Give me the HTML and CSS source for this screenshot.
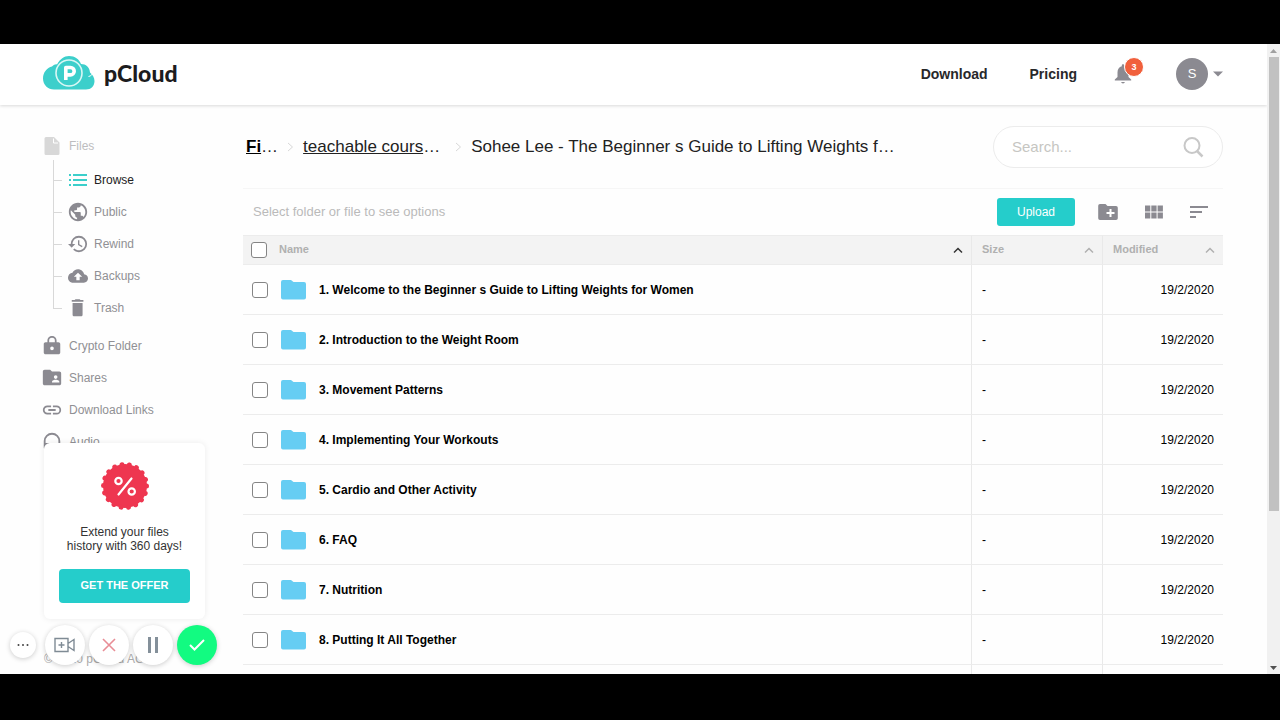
FILE: index.html
```html
<!DOCTYPE html>
<html lang="en">
<head>
  <meta charset="UTF-8">
  <title>pCloud - My files</title>
  <meta name="viewport" content="width=device-width, initial-scale=1.0">
  <link rel="stylesheet" href="styles.css">
</head>

<body>
  <div class="window">
    <div class="page">
      <!-- Top bar -->
      <header class="topbar">
        <a class="logo" href="#">
          <svg width="52" height="34" viewBox="0 0 52 34">
            <path d="M11 33.500C5 33.500 0 29 0 22.500C0 16.500 4 11.500 9 10.500C11 8.500 13 8 14 8.500C17 3 21 0 26 0C32 0 36 3 38 8C43 8 46.500 11 47 16.500C49.500 18.500 51.500 21.500 51.500 25C51.500 30 48 33.500 43 33.500Z" fill="#3ccfcb"/>
            <circle cx="26" cy="17" r="13" fill="#3ccfcb" stroke="#d9f7f5" stroke-width="1.600"/>
            <path d="M22.800 24V11.500H27.500A3.700 3.700 0 0 1 27.500 18.900H22.800" fill="none" stroke="#fff" stroke-width="3.600" stroke-linejoin="round"/>
            <path d="M45.500 20.500C48 20 49.500 18.500 50 16.500" fill="none" stroke="#fff" stroke-width="1"/>
          </svg>
          <span>pCloud</span>
        </a>
        <nav class="topnav">
          <a href="#">Download</a>
          <a href="#">Pricing</a>
          <button class="bell" aria-label="Notifications">
            <svg width="18" height="20" viewBox="0 0 18 20">
              <path d="M9 19.500c1 0 1.800-.6 1.800-1.400H7.200c0 .8.800 1.400 1.800 1.400zM14.500 13V8.500c0-3.200-1.500-5.600-4.300-6.300V1.500C10.200.7 9.700.2 9 .2s-1.200.5-1.200 1.300v.7C5 2.900 3.500 5.300 3.500 8.500V13L.8 15.500v1h16.400v-1z" fill="#8b8a91"/>
            </svg>
            <span class="badge">3</span>
          </button>
          <button class="account" aria-label="Account">
            <span class="avatar">S</span>
            <svg width="10" height="6" viewBox="0 0 10 6"><path d="M0 .5h10L5 5.500z" fill="#8b8a91"/></svg>
          </button>
        </nav>
      </header>

      <div class="content">
        <!-- Sidebar -->
        <aside class="sidebar">
          <nav class="menu">
            <a class="item files" href="#">
              <svg width="18" height="20" viewBox="0 0 18 20"><path d="M3 1h8l5.500 5.500V17.500a1.500 1.500 0 0 1-1.500 1.500h-12A1.500 1.500 0 0 1 1.500 17.500V2.500A1.500 1.500 0 0 1 3 1z" fill="#d8d8d8"/><path d="M10.500 2.500v4.500H15" fill="none" stroke="#fff"/></svg>
              Files
            </a>
            <div class="tree">
              <a class="item active" href="#">
                <svg width="20" height="20" viewBox="0 0 20 20"><path d="M1 4h2v2H1zM1 9h2v2H1zM1 14h2v2H1zM5 4h14v2H5zM5 9h14v2H5zM5 14h14v2H5z" fill="#3ccfcb"/></svg>
                Browse
              </a>
              <a class="item" href="#">
                <svg width="22" height="22" viewBox="0 0 24 24"><path d="M12 2C6.480 2 2 6.480 2 12s4.480 10 10 10 10-4.480 10-10S17.520 2 12 2zm-1 17.930c-3.950-.49-7-3.850-7-7.930 0-.62.08-1.210.21-1.790L9 15v1c0 1.100.9 2 2 2v1.930zm6.900-2.540c-.26-.81-1-1.390-1.900-1.390h-1v-3c0-.55-.45-1-1-1H8v-2h2c.55 0 1-.45 1-1V7h2c1.100 0 2-.9 2-2v-.41c2.930 1.190 5 4.060 5 7.410 0 2.080-.8 3.970-2.100 5.390z"/></svg>
                Public
              </a>
              <a class="item" href="#">
                <svg width="20" height="20" viewBox="0 1 24 22"><path d="M13 3a9 9 0 0 0-9 9H1l3.890 3.890.07.14L9 12H6c0-3.870 3.130-7 7-7s7 3.130 7 7-3.130 7-7 7c-1.930 0-3.680-.79-4.940-2.060l-1.420 1.420A8.950 8.950 0 0 0 13 21a9 9 0 0 0 0-18zm-1 5v5l4.280 2.540.72-1.210-3.500-2.080V8H12z"/></svg>
                Rewind
              </a>
              <a class="item" href="#">
                <svg width="20" height="20" viewBox="0 0 24 24"><path d="M19.350 10.040C18.670 6.590 15.640 4 12 4 9.110 4 6.600 5.640 5.350 8.040 2.340 8.360 0 10.910 0 14c0 3.310 2.690 6 6 6h13c2.760 0 5-2.240 5-5 0-2.640-2.050-4.780-4.650-4.960zM14 13v4h-4v-4H7l5-5 5 5h-3z"/></svg>
                Backups
              </a>
              <a class="item" href="#">
                <svg width="20" height="20" viewBox="0 1 24 24"><path d="M5.500 21c0 1.100.9 2 2 2h8c1.100 0 2-.9 2-2V7h-12v14zM18.500 3.500H15l-1-1H9l-1 1H4.500v2h14v-2z"/></svg>
                Trash
              </a>
            </div>
            <a class="item" href="#">
              <svg width="22" height="22" viewBox="0 0 24 24"><path d="M18 8h-1V6c0-2.760-2.240-5-5-5S7 3.240 7 6v2H5c-1.100 0-2 .9-2 2v9c0 1.100.9 2 2 2h14c1.100 0 2-.9 2-2v-9c0-1.100-.9-2-2-2zm-6 8.500a2 2 0 1 1 0-4 2 2 0 0 1 0 4zm3.100-8.500H8.900V6a3.100 3.100 0 0 1 6.200 0v2z"/></svg>
              Crypto Folder
            </a>
            <a class="item" href="#">
              <svg width="22" height="22" viewBox="1 1 24 24"><path d="M21 6h-8l-2-2H5c-1.100 0-2 .9-2 2v13c0 1.100.9 2 2 2h16c1.100 0 2-.9 2-2V8c0-1.100-.9-2-2-2zm-4 4a2 2 0 1 1 0 4 2 2 0 0 1 0-4zm4 8h-8v-1c0-1.330 2.670-2 4-2s4 .67 4 2v1z"/></svg>
              Shares
            </a>
            <a class="item" href="#">
              <svg width="22" height="22" viewBox="0 0 24 24"><path d="M3.900 12c0-1.710 1.390-3.100 3.100-3.100h4V7H7a5 5 0 0 0 0 10h4v-1.900H7c-1.710 0-3.100-1.390-3.100-3.100zM8 13h8v-2H8v2zm9-6h-4v1.900h4a3.100 3.100 0 0 1 0 6.200h-4V17h4a5 5 0 0 0 0-10z"/></svg>
              Download Links
            </a>
            <a class="item" href="#">
              <svg width="22" height="22" viewBox="0 0 24 24"><path d="M12 2a9 9 0 0 0-9 9v7c0 1.660 1.340 3 3 3h3v-8H5v-2a7 7 0 0 1 14 0v2h-4v8h3c1.660 0 3-1.340 3-3v-7a9 9 0 0 0-9-9z"/></svg>
              Audio
            </a>
          </nav>

          <section class="promo">
            <svg width="50" height="50" viewBox="-25 -25 50 50">
              <circle r="22" fill="#ee3650"/>
              <circle r="21.500" fill="none" stroke="#ee3650" stroke-width="5" stroke-linecap="round" stroke-dasharray="0.010 7.495"/>
              <g fill="none" stroke="#fff" stroke-width="2.200" stroke-linecap="round">
                <path d="M6.500 -7.500L-6.500 8.500"/>
                <circle cx="-6.500" cy="-5" r="3.200"/>
                <circle cx="6.700" cy="5.500" r="3.200"/>
              </g>
            </svg>
            <p>Extend your files<br>history with 360 days!</p>
            <button class="offer">GET THE OFFER</button>
          </section>

          <footer class="copyright">© 2020 pCloud AG</footer>
        </aside>

        <!-- File list -->
        <main class="main">
          <div class="pathbar">
            <nav class="crumbs">
              <span><a class="root" href="#">Fi</a>…</span>
              <svg width="7" height="10" viewBox="0 0 7 10"><path d="M1 1l4.500 4L1 9"/></svg>
              <span class="parent"><a href="#">teachable cours</a>…</span>
              <svg width="7" height="10" viewBox="0 0 7 10"><path d="M1 1l4.500 4L1 9"/></svg>
              <span>Sohee Lee - The Beginner s Guide to Lifting Weights f…</span>
            </nav>
            <form class="search">
              <input type="search" placeholder="Search..." aria-label="Search">
              <button aria-label="Find">
                <svg width="22" height="22" viewBox="0 0 22 22"><circle cx="10" cy="9.500" r="7.500"/><path d="M15 15L20.500 20.500" stroke-width="2.500"/></svg>
              </button>
            </form>
          </div>

          <div class="toolbar">
            <span class="hint">Select folder or file to see options</span>
            <button class="upload">Upload</button>
            <button class="tool" aria-label="New folder">
              <svg width="20" height="18" viewBox="0 0 20 18"><path d="M2 1h5.500l2 2H18a1.800 1.800 0 0 1 1.800 1.800v10.400A1.800 1.800 0 0 1 18 17H2A1.800 1.800 0 0 1 .2 15.200V2.800A1.800 1.800 0 0 1 2 1z"/><path d="M8.500 10h8M12.500 6v8" stroke="#fff" stroke-width="2"/></svg>
            </button>
            <button class="tool" aria-label="Grid view">
              <svg width="18" height="14" viewBox="0 0 18 14"><path d="M0 .5h5.300v6H0zM6.300.5h5.300v6H6.300zM12.600.5h5.300v6h-5.300zM0 7.500h5.300v6H0zM6.300 7.500h5.300v6H6.300zM12.600 7.500h5.300v6h-5.300z"/></svg>
            </button>
            <button class="tool" aria-label="Sort">
              <svg width="18" height="14" viewBox="0 0 18 14"><path d="M0 1h18v2H0zM0 6h12v2H0zM0 11h6v2H0z"/></svg>
            </button>
          </div>

          <table class="files-table">
            <thead>
              <tr>
                <th class="name">
                  <div class="head">
                    <input type="checkbox" aria-label="Select all">
                    <span>Name</span>
                    <svg class="sorted" width="10" height="7" viewBox="0 0 10 7"><path d="M1 5.500L5 1.500L9 5.500"/></svg>
                  </div>
                </th>
                <th class="size">
                  <div class="head">
                    <span>Size</span>
                    <svg width="10" height="7" viewBox="0 0 10 7"><path d="M1 5.500L5 1.500L9 5.500"/></svg>
                  </div>
                </th>
                <th class="modified">
                  <div class="head">
                    <span>Modified</span>
                    <svg width="10" height="7" viewBox="0 0 10 7"><path d="M1 5.500L5 1.500L9 5.500"/></svg>
                  </div>
                </th>
              </tr>
            </thead>
            <tbody id="rows"></tbody>
          </table>
        </main>
      </div>
    </div>

    <div class="scrollbar">
      <svg width="7" height="4" viewBox="0 0 7 4"><path d="M0 4h7L3.500 0z" fill="#a0a0a0"/></svg>
      <div class="track"><div class="thumb"></div></div>
      <svg width="7" height="4" viewBox="0 0 7 4"><path d="M0 0h7L3.500 4z" fill="#505050"/></svg>
    </div>

    <!-- Recorder controls -->
    <div class="recorder">
      <button class="more" aria-label="More"><svg width="12" height="4" viewBox="0 0 12 4" fill="#444"><circle cx="1.500" cy="2" r="1"/><circle cx="6" cy="2" r="1"/><circle cx="10.500" cy="2" r="1"/></svg></button>
      <button aria-label="Camera"><svg width="22" height="16" viewBox="0 0 22 16" fill="none" stroke="#7f8b95" stroke-width="1.400"><path d="M1 1.500h13v13H1zM14 6.500l6-4v11l-6-4M4.500 8h6M7.500 5v6"/></svg></button>
      <button aria-label="Cancel"><svg width="14" height="14" viewBox="0 0 14 14" fill="none" stroke="#e88d96" stroke-width="1.600"><path d="M1 1l12 12M13 1L1 13"/></svg></button>
      <button aria-label="Pause"><svg width="12" height="16" viewBox="0 0 12 16" fill="#84909a"><path d="M1 0h3v16H1zM8 0h3v16H8z"/></svg></button>
      <button class="done" aria-label="Finish"><svg width="16" height="12" viewBox="0 0 16 12" fill="none" stroke="#fff" stroke-width="2"><path d="M1 6l4.500 4.500L15 1"/></svg></button>
    </div>
  </div>

  <script src="script.js"></script>
</body>
</html>
```
FILE: styles.css
```css
* {
  margin: 0;
  padding: 0;
  box-sizing: border-box;
}
body {
  font-family: "Liberation Sans", Arial, sans-serif;
  font-size: 13px;
  background-color: #000;
  height: 100vh;
  padding: 44px 0 46px;
  overflow: hidden;
}
a {
  color: inherit;
  text-decoration: none;
}
button {
  font-family: inherit;
  border: none;
  background: none;
  cursor: pointer;
}
svg {
  display: block;
  flex-shrink: 0;
}
.window {
  position: relative;
  display: flex;
  height: 100%;
  background-color: #fefefe;
  overflow: hidden;
}
.page {
  flex: 1;
  min-width: 0;
  display: flex;
  flex-direction: column;
}

/* TOP BAR */
.topbar {
  display: flex;
  flex-shrink: 0;
  align-items: center;
  justify-content: space-between;
  height: 61px;
  padding: 0 44px 2px 43px;
  background-color: #fff;
  box-shadow: 0 1px 3px rgba(0, 0, 0, 0.15);
}
.logo {
  display: flex;
  align-items: center;
  gap: 9px;
  font-family: Lato, sans-serif;
  font-size: 23px;
  font-weight: 900;
  line-height: 28px;
  padding-bottom: 2px;
  color: #1c1c1e;
}
.topnav {
  display: flex;
  align-items: center;
  font-size: 14px;
  font-weight: bold;
  color: #28282a;
}
.topnav a {
  margin-right: 42px;
}
.bell {
  position: relative;
  width: 18px;
  margin: 0 44px 0 -5px;
}
.badge {
  position: absolute;
  top: -7px;
  left: 10px;
  width: 20px;
  height: 20px;
  border: 1px solid #fff;
  border-radius: 50%;
  background-color: #f1603c;
  color: #fff;
  font-size: 9px;
  font-weight: bold;
  line-height: 18px;
  text-align: center;
}
.account {
  display: flex;
  align-items: center;
  gap: 5px;
}
.avatar {
  width: 32px;
  height: 32px;
  border-radius: 50%;
  background-color: #8b8a91;
  color: #fff;
  font-size: 13px;
  line-height: 32px;
}

.content {
  flex: 1;
  min-height: 0;
  display: flex;
  gap: 38px;
  padding: 0 44px;
}

/* SIDEBAR */
.sidebar {
  display: flex;
  flex-direction: column;
  flex-shrink: 0;
  width: 161px;
}
.menu {
  flex: 1;
  min-height: 0;
  padding-top: 25px;
  margin-left: -3px;
}
.item {
  display: flex;
  align-items: center;
  gap: 6px;
  height: 32px;
  color: #909094;
  fill: #8b8a91;
  font-size: 13px;
}
.item svg {
  width: 22px;
}
.files {
  color: #bdbdbf;
}
.tree {
  margin: 2px 0 6px 12px;
  position: relative;
}
.tree::before {
  content: "";
  position: absolute;
  top: -4px;
  bottom: 16px;
  left: 0;
  border-left: 1px solid #d8d8d8;
}
.tree .item {
  gap: 5px;
}
.tree .item::before {
  content: "";
  width: 9px;
  border-top: 1px solid #d8d8d8;
}
.menu .item {
  font-size: 12px;
}
.tree .active {
  color: #222;
}
.promo {
  position: relative;
  display: flex;
  flex-direction: column;
  align-items: center;
  flex-shrink: 0;
  height: 176px;
  padding: 18px 15px 15px;
  border-radius: 6px;
  background-color: #fff;
  box-shadow: 0 0 6px rgba(0, 0, 0, 0.08);
}
.promo p {
  margin: 14px 0 16px;
  color: #333;
  font-size: 12px;
  line-height: 14px;
  text-align: center;
}
.offer {
  width: 100%;
  height: 34px;
  padding-bottom: 2px;
  border-radius: 4px;
  background-color: #25cdcb;
  color: #fff;
  font-size: 11px;
  font-weight: bold;
}
.copyright {
  flex-shrink: 0;
  height: 55px;
  padding-top: 33px;
  color: #aaa;
  font-size: 12px;
  line-height: 14px;
}

/* MAIN */
.main {
  flex: 1;
  min-width: 0;
}
.pathbar {
  display: flex;
  align-items: center;
  justify-content: space-between;
  height: 84px;
  border-bottom: 1px solid #f6f6f6;
}
.crumbs {
  display: flex;
  align-items: center;
  gap: 9px;
  padding-left: 3px;
  color: #222;
  font-size: 17px;
  white-space: nowrap;
}
.crumbs svg {
  fill: none;
  stroke: #d8d8d8;
}
.crumbs a {
  text-decoration: underline;
}
.crumbs .root {
  color: #000;
  font-weight: bold;
}
.crumbs .parent {
  padding-right: 6px;
}
.search {
  display: flex;
  align-items: center;
  width: 230px;
  height: 42px;
  padding: 0 18px;
  border: 1px solid #ececec;
  border-radius: 21px;
  background-color: #fff;
}
.search input {
  flex: 1;
  min-width: 0;
  border: none;
  outline: none;
  background: none;
  font-family: inherit;
  font-size: 15px;
}
.search input::placeholder {
  color: #c6c6c2;
}
.search svg {
  fill: none;
  stroke: #c8c8c8;
  stroke-width: 2;
}
.toolbar {
  display: flex;
  align-items: center;
  height: 46px;
  padding: 0 15px 0 10px;
}
.hint {
  flex: 1;
  padding-bottom: 2px;
  color: #bababa;
}
.upload {
  width: 78px;
  height: 28px;
  border-radius: 3px;
  background-color: #25cdcb;
  color: #fff;
  font-size: 12px;
}
.tool {
  margin-left: 27px;
  fill: #8b8a91;
}
.upload + .tool {
  margin-left: 23px;
}

/* FILES TABLE */
.files-table {
  width: 100%;
  table-layout: fixed;
  border-collapse: separate;
  border-spacing: 0;
  font-size: 12px;
}
.files-table th {
  height: 30px;
  border-top: 1px solid #ececec;
  border-bottom: 1px solid #ececec;
  background-color: #f3f3f3;
  color: #b0b0b0;
  font-size: 11px;
  text-align: left;
}
.files-table td {
  height: 50px;
  border-bottom: 1px solid #ececec;
}
.files-table .size,
.files-table .modified {
  border-left: 1px solid #e9e9e9;
  padding: 0 8px 0 10px;
}
.files-table .size {
  width: 131px;
}
.files-table .modified {
  width: 121px;
}
.files-table td.modified {
  padding-right: 9px;
  text-align: right;
}
.files-table th.name {
  padding: 0 8px;
}
.files-table td.name {
  padding: 0 9px;
}
.head,
.file {
  display: flex;
  align-items: center;
}
.head span {
  flex: 1;
  padding-bottom: 3px;
}
.head svg {
  fill: none;
  stroke: #b0b0b0;
  stroke-width: 1.5;
}
.head .sorted {
  stroke: #333;
}
.files-table input {
  appearance: none;
  width: 16px;
  height: 16px;
  margin-right: 13px;
  border: 1px solid #858585;
  border-radius: 3px;
  background-color: #fff;
}
.files-table th input {
  margin-right: 12px;
}
.files-table input:checked {
  background-color: #25cdcb;
}
.file label {
  display: flex;
  align-items: center;
  gap: 13px;
  font-weight: bold;
  color: #000;
}

/* SCROLLBAR */
.scrollbar {
  display: flex;
  flex-direction: column;
  align-items: center;
  width: 13px;
  padding: 5px 0 4px;
  background-color: #f1f1f1;
}
.track {
  flex: 1;
  width: 10px;
  padding: 4px 0;
}
.thumb {
  height: 75%;
  background-color: #c1c1c1;
}

/* RECORDER */
.recorder {
  position: absolute;
  left: 10px;
  bottom: 9px;
  display: flex;
  align-items: center;
  gap: 4px;
}
.recorder button {
  display: flex;
  align-items: center;
  justify-content: center;
  width: 40px;
  height: 40px;
  border-radius: 50%;
  background-color: #fff;
  box-shadow: 0 1px 5px rgba(0, 0, 0, 0.2);
}
.recorder .more {
  width: 26px;
  height: 26px;
  margin-right: 5px;
}
.recorder .done {
  background-color: #12fb81;
}
```
FILE: script.js
```js
const folders = [
  '1. Welcome to the Beginner s Guide to Lifting Weights for Women',
  '2. Introduction to the Weight Room',
  '3. Movement Patterns',
  '4. Implementing Your Workouts',
  '5. Cardio and Other Activity',
  '6. FAQ',
  '7. Nutrition',
  '8. Putting It All Together'
];

const rows = document.getElementById('rows');

folders.forEach((name, i) => {
  rows.innerHTML += `
    <tr>
      <td class="name">
        <div class="file">
          <input type="checkbox" id="folder${i}">
          <label for="folder${i}">
            <svg width="25" height="21" viewBox="0 0 25 21"><path d="M2 1h8l2.500 2H23a2 2 0 0 1 2 2v13.500a2 2 0 0 1-2 2H2a2 2 0 0 1-2-2V3a2 2 0 0 1 2-2z" fill="#66cdf3"/></svg>
            ${name}
          </label>
        </div>
      </td>
      <td class="size">-</td>
      <td class="modified">19/2/2020</td>
    </tr>`;
});

// empty row keeps the column lines going under the last folder
rows.innerHTML += '<tr><td class="name"></td><td class="size"></td><td class="modified"></td></tr>';
```
